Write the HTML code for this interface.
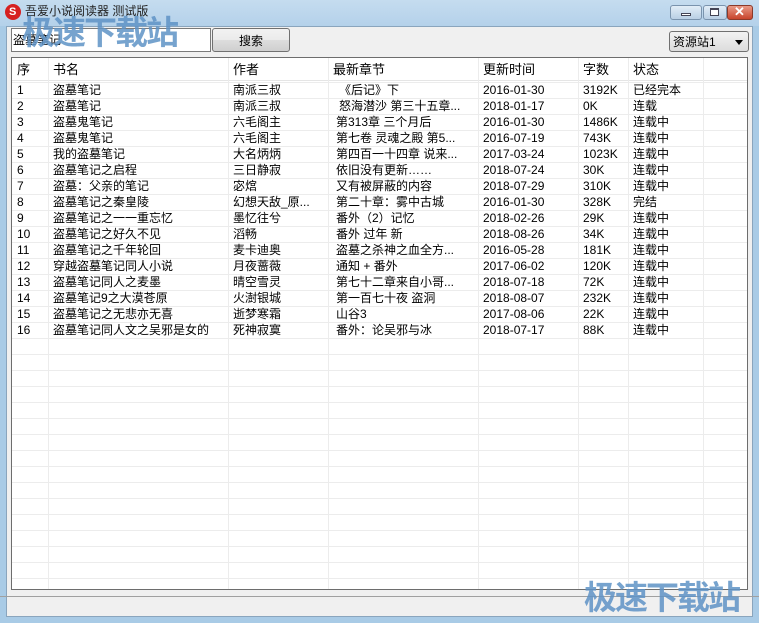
<!DOCTYPE html>
<html><head><meta charset="utf-8"><style>
*{margin:0;padding:0;box-sizing:border-box}
body{width:759px;height:623px;overflow:hidden;background:#a9cbe6;font-family:"Liberation Sans","SimSun","Noto Sans CJK SC",sans-serif;font-size:12px;color:#000;position:relative}
.abs{position:absolute}
#title{left:0;top:0;width:759px;height:26px;background:linear-gradient(#c5dcef,#b4d1ea)}
#client{left:6px;top:26px;width:747px;height:591px;background:#f0f0f0;border:1px solid #8aa5bd}
.t{position:absolute;white-space:nowrap;font-size:12px;line-height:16px}
#table{left:11px;top:57px;width:737px;height:533px;background:#fff;border:1px solid #6d6d6d;overflow:hidden}
.hl{position:absolute;left:0;width:737px;height:1px;background:#ececec}
.vl{position:absolute;top:0;width:1px;height:533px;background:#ececec}
.wm{font-family:"Noto Sans CJK SC",sans-serif;font-weight:bold;font-size:33px;color:#5f93c6;opacity:.85;letter-spacing:-2px}
</style></head><body>
<div id="title" class="abs"></div>
<div class="abs" style="left:5px;top:4px;width:16px;height:16px;border-radius:50%;background:#d62020"></div>
<div class="abs" style="left:9px;top:7px;color:#fff;font-weight:bold;font-size:11px;line-height:10px">S</div>
<div class="t" style="left:25px;top:3px;font-size:12px;color:#222">吾爱小说阅读器 测试版</div>
<div class="abs" style="left:670px;top:5px;width:32px;height:15px;border:1px solid #7a93ad;border-radius:3px;background:linear-gradient(#e2edf7,#b9cfe4)"></div>
<div class="abs" style="left:681px;top:13px;width:10px;height:3px;background:#fff;border:1px solid #445"></div>
<div class="abs" style="left:703px;top:5px;width:24px;height:15px;border:1px solid #7a93ad;border-radius:3px;background:linear-gradient(#e2edf7,#b9cfe4)"></div>
<div class="abs" style="left:710px;top:8px;width:9px;height:8px;border:1px solid #445;border-top-width:2px;background:#fff"></div>
<div class="abs" style="left:727px;top:5px;width:26px;height:15px;border:1px solid #8a3a2a;border-radius:3px;background:linear-gradient(#e99a86,#c8442c)"></div>
<div class="t" style="left:734px;top:4px;color:#fff;font-weight:bold;font-size:13px">✕</div>
<div id="client" class="abs"></div>
<div class="abs" style="left:11px;top:28px;width:200px;height:24px;background:#fff;border:1px solid #7a7a7a"></div>
<div class="t" style="left:13px;top:32px">盗墓笔记</div>
<div class="abs" style="left:212px;top:28px;width:78px;height:24px;border:1px solid #707070;border-radius:3px;background:linear-gradient(#f2f2f2 0%,#ebebeb 50%,#dddddd 51%,#cfcfcf 100%)"></div>
<div class="t" style="left:239px;top:33px">搜索</div>
<div class="abs" style="left:669px;top:31px;width:80px;height:21px;border:1px solid #707070;border-radius:3px;background:linear-gradient(#f2f2f2,#dcdcdc)"></div>
<div class="t" style="left:673px;top:34px">资源站1</div>
<div class="abs" style="left:735px;top:40px;width:0;height:0;border-left:4px solid transparent;border-right:4px solid transparent;border-top:5px solid #000"></div>
<div id="table" class="abs">
<div class="abs" style="left:0;top:0;width:737px;height:23px;background:#fff;border-bottom:1px solid #e5e5e5"></div>
<div id="grid"></div>
</div>
<div class="abs" style="left:0;top:596px;width:759px;height:1px;background:#a0a0a0"></div>
<div class="abs" style="left:0;top:617px;width:759px;height:6px;background:#a9cbe6"></div>
<div class="abs wm" style="left:22px;top:6px">极速下载站</div>
<div class="abs wm" style="left:584px;top:571px">极速下载站</div>
<script>
(function(){
var cols=[0,36,216,316,466,566,616,691];
var h='';
for(var i=1;i<cols.length;i++)h+='<div class="vl" style="left:'+cols[i]+'px"></div>';
for(var y=24;y<533;y+=16)h+='<div class="hl" style="top:'+y+'px"></div>';
var hd=['序','书名','作者','最新章节','更新时间','字数','状态'];
for(var i=0;i<hd.length;i++)h+='<div class="t" style="left:'+(cols[i]+5)+'px;top:4px;font-size:13px">'+hd[i]+'</div>';
var d=[
['盗墓笔记','南派三叔','《后记》下','2016-01-30','3192K','已经完本'],
['盗墓笔记','南派三叔','怒海潜沙 第三十五章...','2018-01-17','0K','连载'],
['盗墓鬼笔记','六毛阁主','第313章 三个月后','2016-01-30','1486K','连载中'],
['盗墓鬼笔记','六毛阁主','第七卷 灵魂之殿 第5...','2016-07-19','743K','连载中'],
['我的盗墓笔记','大名炳炳','第四百一十四章 说来...','2017-03-24','1023K','连载中'],
['盗墓笔记之启程','三日静寂','依旧没有更新……','2018-07-24','30K','连载中'],
['盗墓：父亲的笔记','宓熍','又有被屏蔽的内容','2018-07-29','310K','连载中'],
['盗墓笔记之秦皇陵','幻想天敌_原...','第二十章：雾中古城','2016-01-30','328K','完结'],
['盗墓笔记之一一重忘忆','墨忆往兮','番外（2）记忆','2018-02-26','29K','连载中'],
['盗墓笔记之好久不见','滔畅','番外 过年 新','2018-08-26','34K','连载中'],
['盗墓笔记之千年轮回','麦卡迪奥','盗墓之杀神之血全方...','2016-05-28','181K','连载中'],
['穿越盗墓笔记同人小说','月夜蔷薇','通知 + 番外','2017-06-02','120K','连载中'],
['盗墓笔记同人之麦墨','晴空雪灵','第七十二章来自小哥...','2018-07-18','72K','连载中'],
['盗墓笔记9之大漠苍原','火澍银城','第一百七十夜 盗洞','2018-08-07','232K','连载中'],
['盗墓笔记之无悲亦无喜','逝梦寒霜','山谷3','2017-08-06','22K','连载中'],
['盗墓笔记同人文之吴邪是女的','死神寂寞','番外：论吴邪与冰','2018-07-17','88K','连载中']];
var cx=[41,221,321,471,571,621];
for(var r=0;r<d.length;r++){var ty=24+16*r;
h+='<div class="t" style="left:5px;top:'+ty+'px">'+(r+1)+'</div>';
for(var c=0;c<6;c++){var x=cx[c];if(c==2&&r<2)x+=6;else if(c==2)x+=3;
h+='<div class="t" style="left:'+x+'px;top:'+ty+'px">'+d[r][c]+'</div>';}}
document.getElementById('grid').innerHTML=h;
})();
</script>
</body></html>
